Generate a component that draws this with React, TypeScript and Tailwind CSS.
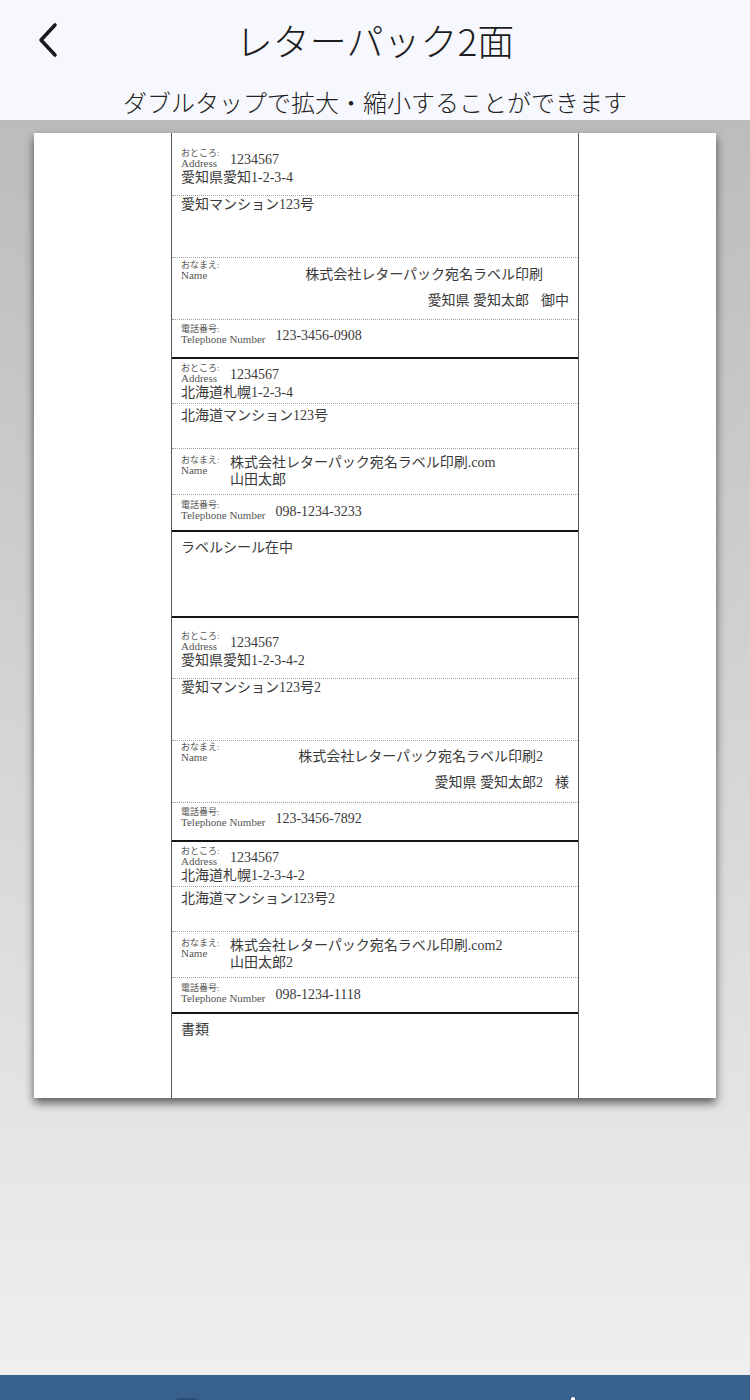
import React from "react";

const paperFont = "font-['Liberation_Serif','Noto_Sans_CJK_JP',serif]";
const text = "text-[14px] leading-[18px] text-[#3a3a3a] whitespace-nowrap";
const jpLabel = "text-[9px] leading-[10px] text-[#555] whitespace-nowrap";
const enLabel = "text-[11px] leading-[11px] text-[#555] whitespace-nowrap";
const dotted = "border-b border-dotted border-[#a0a0a0]";
const thick = "border-b-2 border-solid border-[#151515]";

function AddressRow({ className, zip, addr }: { className: string; zip: string; addr: string }) {
  return (
    <div className={`px-[9px] ${className}`}>
      <div className="flex items-end">
        <div className="w-[40px] flex flex-col">
          <span className={jpLabel}>おところ:</span>
          <span className={enLabel}>Address</span>
        </div>
        <span className={`ml-[9px] ${text}`}>{zip}</span>
      </div>
      <div className={text}>{addr}</div>
    </div>
  );
}

function LineRow({ className, children }: { className: string; children: React.ReactNode }) {
  return <div className={`px-[9px] ${text} ${className}`}>{children}</div>;
}

function NameLabels() {
  return (
    <div className="w-[40px] flex flex-col shrink-0">
      <span className={jpLabel}>おなまえ:</span>
      <span className={enLabel}>Name</span>
    </div>
  );
}

function NameRowRight({
  className,
  company,
  person,
  honor,
}: {
  className: string;
  company: string;
  person: string;
  honor: string;
}) {
  return (
    <div className={`px-[9px] flex items-start ${className}`}>
      <NameLabels />
      <div className="flex-1 flex flex-col items-end">
        <span className={`mt-[6px] mr-[26px] ${text}`}>{company}</span>
        <span className={`mt-[8px] ${text}`}>
          {person}
          <span className="ml-[12px]">{honor}</span>
        </span>
      </div>
    </div>
  );
}

function NameRowLeft({ className, company, person }: { className: string; company: string; person: string }) {
  return (
    <div className={`px-[9px] flex items-start ${className}`}>
      <NameLabels />
      <div className="ml-[9px] flex flex-col -mt-[1px]">
        <span className="text-[14px] leading-[17px] text-[#3a3a3a] whitespace-nowrap">{company}</span>
        <span className="text-[14px] leading-[17px] text-[#3a3a3a] whitespace-nowrap">{person}</span>
      </div>
    </div>
  );
}

function TelRow({ className, number }: { className: string; number: string }) {
  return (
    <div className={`px-[9px] flex items-end ${className}`}>
      <div className="flex flex-col">
        <span className={jpLabel}>電話番号:</span>
        <span className={enLabel}>Telephone Number</span>
      </div>
      <span className={`ml-[10px] ${text}`}>{number}</span>
    </div>
  );
}

function ChevronLeft() {
  return (
    <svg width="22" height="36" viewBox="0 0 22 36" fill="none">
      <polyline
        points="18,3 4,18 18,33"
        stroke="#1a1a1a"
        strokeWidth="3.6"
        strokeLinecap="round"
        strokeLinejoin="round"
      />
    </svg>
  );
}

export default function App() {
  return (
    <div className="w-[750px] h-[1400px] flex flex-col overflow-hidden font-['Noto_Sans_CJK_JP','Noto_Sans',sans-serif]">
      <header className="h-[120px] bg-[#f7f8fd] flex flex-col">
        <div className="h-[80px] grid grid-cols-[100px_1fr_100px] items-center">
          <div className="pl-[37px] flex items-center">
            <ChevronLeft />
          </div>
          <h1 className="text-center text-[37px] leading-none font-light text-[#1c1c1c]">レターパック2面</h1>
          <div />
        </div>
        <p className="mt-[4px] text-center text-[24px] leading-[36px] font-light text-[#222]">
          ダブルタップで拡大・縮小することができます
        </p>
      </header>

      <main className="flex-1 bg-linear-to-b from-[#bcbcbc] to-[#efefef] pt-[13px]">
        <div
          className={`mx-auto w-[682px] h-[965px] bg-white grid grid-cols-[137px_408px_137px] shadow-[0_5px_9px_rgba(0,0,0,0.6)] ${paperFont}`}
        >
          <div />
          <div className="border-x border-[#555] flex flex-col">
            {/* label 1 */}
            <AddressRow className={`h-[63px] pt-[15px] ${dotted}`} zip="1234567" addr="愛知県愛知1-2-3-4" />
            <LineRow className={`h-[62px] pt-0 ${dotted}`}>愛知マンション123号</LineRow>
            <NameRowRight
              className={`h-[62px] pt-[2px] ${dotted}`}
              company="株式会社レターパック宛名ラベル印刷"
              person="愛知県 愛知太郎"
              honor="御中"
            />
            <TelRow className={`h-[39px] pb-[12px] ${thick}`} number="123-3456-0908" />

            {/* label 1 sender */}
            <AddressRow className={`h-[45px] pt-[4px] ${dotted}`} zip="1234567" addr="北海道札幌1-2-3-4" />
            <LineRow className={`h-[45px] pt-[3px] ${dotted}`}>北海道マンション123号</LineRow>
            <NameRowLeft
              className={`h-[46px] pt-[6px] ${dotted}`}
              company="株式会社レターパック宛名ラベル印刷.com"
              person="山田太郎"
            />
            <TelRow className={`h-[37px] pb-[9px] ${thick}`} number="098-1234-3233" />

            <LineRow className={`h-[86px] pt-[7px] ${thick}`}>ラベルシール在中</LineRow>

            {/* label 2 */}
            <AddressRow className={`h-[61px] pt-[13px] ${dotted}`} zip="1234567" addr="愛知県愛知1-2-3-4-2" />
            <LineRow className={`h-[62px] pt-0 ${dotted}`}>愛知マンション123号2</LineRow>
            <NameRowRight
              className={`h-[62px] pt-[1px] ${dotted}`}
              company="株式会社レターパック宛名ラベル印刷2"
              person="愛知県 愛知太郎2"
              honor="様"
            />
            <TelRow className={`h-[39px] pb-[12px] ${thick}`} number="123-3456-7892" />

            {/* label 2 sender */}
            <AddressRow className={`h-[45px] pt-[4px] ${dotted}`} zip="1234567" addr="北海道札幌1-2-3-4-2" />
            <LineRow className={`h-[45px] pt-[3px] ${dotted}`}>北海道マンション123号2</LineRow>
            <NameRowLeft
              className={`h-[46px] pt-[6px] ${dotted}`}
              company="株式会社レターパック宛名ラベル印刷.com2"
              person="山田太郎2"
            />
            <TelRow className={`h-[36px] pb-[8px] ${thick}`} number="098-1234-1118" />

            <LineRow className="h-[84px] pt-[7px]">書類</LineRow>
          </div>
          <div />
        </div>
      </main>

      <footer className="h-[25px] bg-[#37618c] flex items-end">
        <div className="ml-[177px] w-[20px] h-[2px] bg-[#2b4f74]" />
        <div className="ml-[374px] w-[4px] h-[3px] rounded-t-full bg-white" />
      </footer>
    </div>
  );
}
